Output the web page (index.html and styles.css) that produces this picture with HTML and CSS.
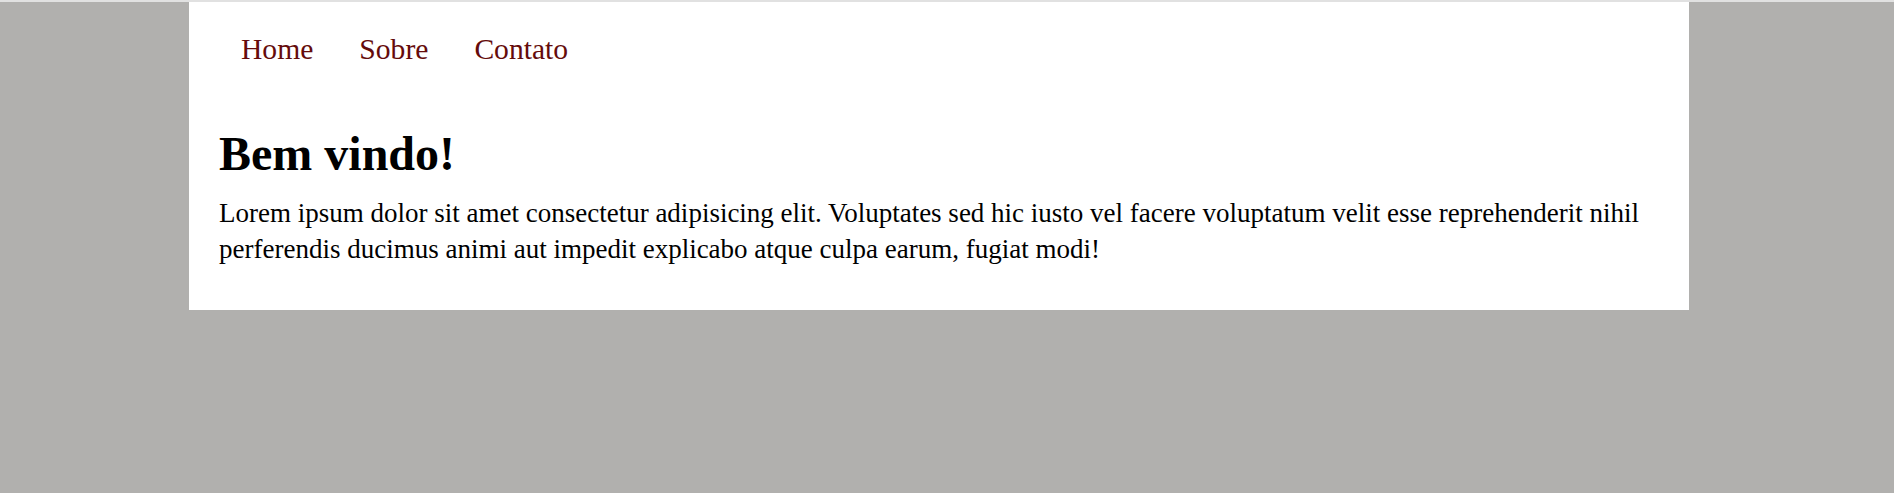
FILE: index.html
```html
<!DOCTYPE html>
<html lang="pt-BR">
<head>
<meta charset="utf-8">
<title>Bem vindo!</title>
<link rel="stylesheet" href="styles.css">
</head>
<body>
  <div class="page">
    <header class="site-header">
      <nav class="nav">
        <ul class="nav-list">
          <li class="nav-item"><a class="nav-link" href="#">Home</a></li>
          <li class="nav-item"><a class="nav-link" href="#">Sobre</a></li>
          <li class="nav-item"><a class="nav-link" href="#">Contato</a></li>
        </ul>
      </nav>
    </header>
    <main class="content">
      <h1 class="title">Bem vindo!</h1>
      <p class="text">Lorem ipsum dolor sit amet consectetur adipisicing elit. Voluptates sed hic iusto vel facere voluptatum velit esse reprehenderit nihil perferendis ducimus animi aut impedit explicabo atque culpa earum, fugiat modi!</p>
    </main>
  </div>
</body>
</html>
```
FILE: styles.css
```css
html, body {
  margin: 0;
  padding: 0;
}

body {
  background: #b1b0ae;
  border-top: 2px solid #e1e1e1;
  font-family: "Liberation Serif", "Times New Roman", serif;
  color: #000;
  min-height: 491px;
}

.page {
  width: 1500px;
  margin-left: 189px;
  background: #ffffff;
  padding-bottom: 43px;
}

.nav {
  padding: 31px 0 0 29px;
}

.nav-list {
  display: flex;
  list-style: none;
  margin: 0;
  padding: 0;
}

.nav-item {
  font-size: 29.6px;
  line-height: 33px;
}

.nav-link {
  display: block;
  padding: 0 23px;
  color: #650b0b;
  text-decoration: none;
}

.content {
  padding: 61px 30px 0 30px;
}

.title {
  margin: 0;
  font-size: 48px;
  line-height: 53px;
  font-weight: bold;
}

.text {
  margin: 15px 0 0 0;
  font-size: 27px;
  line-height: 36px;
}
```
